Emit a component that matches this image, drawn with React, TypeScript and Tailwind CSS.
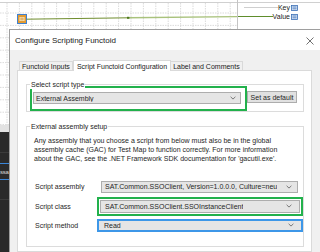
import React from 'react';

const gridX = Array.from({ length: 19 }, (_, i) => 7 + i * 12.4);

function Chevron() {
  return (
    <svg width="6" height="4" viewBox="0 0 6 4" className="shrink-0">
      <path d="M0.6 0.8 L3 3.1 L5.4 0.8" fill="none" stroke="#6b6b6b" strokeWidth="0.9" />
    </svg>
  );
}

function FieldIcon() {
  return (
    <svg width="7" height="6" viewBox="0 0 7 6" className="shrink-0 ml-[1px]">
      <rect x="0.5" y="0.5" width="6" height="5" fill="#dbe6f5" stroke="#3b6fb6" strokeWidth="0.8" />
      <path d="M1.5 2 H5.5 M1.5 3.8 H5.5" stroke="#3b6fb6" strokeWidth="0.8" />
    </svg>
  );
}

// mapper grid with the link from the functoid
function MapperCanvas() {
  return (
    <div className="h-[29px] flex shrink-0">
      <svg width="237" height="29" className="shrink-0">
        {gridX.map(x => (
          <line key={x} x1={x} y1="3" x2={x} y2="29" stroke="#d2d2d2" strokeWidth="0.8" strokeDasharray="1.5 1" />
        ))}
        {[13, 25.4].map(y => (
          <line key={y} x1="0" y1={y} x2="237" y2={y} stroke="#d2d2d2" strokeWidth="0.8" strokeDasharray="1.5 1" />
        ))}
        <line x1="0" y1="2.5" x2="237" y2="2.5" stroke="#d0d0d0" strokeWidth="1" />
        <line x1="26" y1="19.2" x2="128" y2="17.8" stroke="#6f8d2d" strokeWidth="1" />
        <line x1="128" y1="17.8" x2="237" y2="16.6" stroke="#a9c27c" strokeWidth="1.4" />
        <rect x="127" y="16.8" width="2.4" height="2" fill="#4f7a1c" />
        <rect x="17.5" y="14.5" width="9" height="9" fill="#e39a30" stroke="#3f80cf" strokeWidth="1" />
        <rect x="19.5" y="17" width="5" height="4" fill="#fbe7b8" />
        <path d="M20.3 18.2 H23.7 M20.3 19.8 H23.7" stroke="#b66d12" strokeWidth="0.6" />
      </svg>
      <div className="flex-1 flex flex-col border-l border-[#c4c4c4]">
        <div className="mt-[2px] border-t border-[#d0d0d0]" />
        <div className="h-[9px] flex items-center pr-[22px]">
          <div className="flex-1 h-px bg-[#cfcfcf] ml-[6px]" />
          <span className="text-[7px] leading-none text-[#222]">Key</span>
          <FieldIcon />
        </div>
        <div className="h-[9px] flex items-center pr-[22px]">
          <div className="flex-1 h-px bg-[#5f8d2c]" />
          <span className="text-[7px] leading-none text-[#222]">Value</span>
          <FieldIcon />
        </div>
      </div>
    </div>
  );
}

function SideStrip() {
  return (
    <div className="w-[9px] shrink-0 flex flex-col overflow-hidden">
      <svg width="9" height="96" className="shrink-0">
        <line x1="7" y1="0" x2="7" y2="96" stroke="#d2d2d2" strokeWidth="0.8" strokeDasharray="1.5 1" />
        {[8.8, 21.2, 33.6, 46, 58.4, 70.8, 83.2, 95.6].map(y => (
          <line key={y} x1="0" y1={y} x2="9" y2={y} stroke="#d2d2d2" strokeWidth="0.8" strokeDasharray="1.5 1" />
        ))}
      </svg>
      <div className="h-[7px] bg-[#e3e3e3] shrink-0" />
      <div className="flex-1 bg-[#2a2a2a] flex flex-col">
        <div className="h-[21px] border-b border-[#3b3b3b]" />
        <div className="h-[10px]" />
        <div className="h-[17px] border-y border-[#3a86d8] flex items-center overflow-hidden">
          <span className="text-[6px] leading-none text-[#d8d8d8] whitespace-nowrap tracking-[-0.2px]">ssa</span>
        </div>
        <div className="h-[20px] border-b border-[#3b3b3b]" />
      </div>
    </div>
  );
}

function GroupBox({ label, className, children }: { label: string; className?: string; children: React.ReactNode }) {
  return (
    <div className={`relative border border-[#dcdcdc] ${className ?? ''}`}>
      <span className="absolute -top-[5px] left-[3px] bg-white px-[1px] text-[7px] leading-[9px] whitespace-nowrap">
        {label}
      </span>
      {children}
    </div>
  );
}

function Select({ value, className }: { value: string; className?: string }) {
  return (
    <div className={`h-[12px] bg-[#e5e5e5] border border-[#adadad] flex items-center justify-between gap-[4px] pl-[2px] pr-[4px] ${className ?? ''}`}>
      <span className="text-[7px] leading-none whitespace-nowrap overflow-hidden min-w-0">{value}</span>
      <Chevron />
    </div>
  );
}

function Dialog() {
  return (
    <div className="flex-1 min-w-0 flex flex-col border-l border-t border-[#9e9e9e] bg-[#f0f0f0]">
      <div className="h-[20px] shrink-0 bg-white flex items-center justify-between pl-[5px] pr-[6px] pt-px">
        <span className="text-[8px] leading-none text-[#1a1a1a]">Configure Scripting Functoid</span>
        <svg width="8" height="8" viewBox="0 0 8 8">
          <path d="M0.5 0.5 L7.5 7.5 M7.5 0.5 L0.5 7.5" stroke="#333" strokeWidth="0.7" />
        </svg>
      </div>

      <div className="flex-1 min-h-0 flex flex-col pl-[7px] pr-[8px] pt-[9px]">
        {/* tabs */}
        <div className="h-[11px] shrink-0 flex items-end pl-[2px] text-[7px] leading-none">
          <div className="h-[9px] flex items-center px-[2px] border border-b-0 border-[#d9d9d9]">Functoid Inputs</div>
          <div className="h-[11px] flex items-center px-[3px] border border-b-0 border-[#d9d9d9] bg-white -mb-px relative z-10">
            Script Functoid Configuration
          </div>
          <div className="h-[9px] flex items-center px-[2px] border border-b-0 border-l-0 border-[#d9d9d9]">Label and Comments</div>
        </div>

        {/* tab page */}
        <div className="flex-1 bg-white border border-[#dadada] pl-[8px] pr-[7px] pt-[13px] text-[#262626]">
          <GroupBox label="Select script type">
            <div className="flex items-start pl-[3px] pt-[1px]">
              <div className="w-[217px] border-2 border-[#22b14c] pl-[1px] pt-[4px] pr-[4px] pb-[5px]">
                <Select value="External Assembly" />
              </div>
              <div className="mt-[5px] h-[12px] w-[50px] bg-[#e1e1e1] border border-[#adadad] flex items-center justify-center text-[7px] leading-none">
                Set as default
              </div>
            </div>
          </GroupBox>

          <GroupBox label="External assembly setup" className="mt-[14px]">
            <div className="pl-[7px] pt-[8.5px] pb-[14px]">
              <p className="text-[7px] leading-[9px] whitespace-nowrap">
                Any assembly that you choose a script from below must also be in the global
                <br />
                assembly cache (GAC) for Test Map to function correctly. For more information
                <br />
                about the GAC, see the .NET Framework SDK documentation for 'gacutil.exe'.
              </p>

              <div className="mt-[18px] flex items-center pl-[1px] text-[7px]">
                <span className="w-[62px] shrink-0 leading-none">Script assembly</span>
                <Select
                  className="ml-[4px] w-[197px] pl-[3px] pr-[5px] gap-[9px]"
                  value="SAT.Common.SSOClient, Version=1.0.0.0, Culture=neutral, PublicKeyToken=null"
                />
              </div>

              <div className="mt-[4px] flex items-center pl-[1px] text-[7px]">
                <span className="w-[62px] shrink-0 leading-none">Script class</span>
                <div className="flex-1 border-2 border-[#22b14c] p-[1px]">
                  <Select className="h-[13px] pl-[4px] pr-[7px]" value="SAT.Common.SSOClient.SSOInstanceClient" />
                </div>
              </div>

              <div className="mt-[3px] flex items-center pl-[1px] text-[7px]">
                <span className="w-[62px] shrink-0 leading-none">Script method</span>
                <div className="flex-1 h-[13px] border-2 border-[#3d97e8] bg-[#e5e5e5] flex items-center justify-between pl-[5px] pr-[7px]">
                  <span className="leading-none">Read</span>
                  <Chevron />
                </div>
              </div>
            </div>
          </GroupBox>
        </div>
      </div>
    </div>
  );
}

export default function App() {
  return (
    <div className="w-[320px] h-[252px] overflow-hidden bg-white flex flex-col font-['Liberation_Sans',Arial,sans-serif] text-[#1a1a1a]">
      <MapperCanvas />
      <div className="flex flex-1 min-h-0">
        <SideStrip />
        <Dialog />
      </div>
    </div>
  );
}
